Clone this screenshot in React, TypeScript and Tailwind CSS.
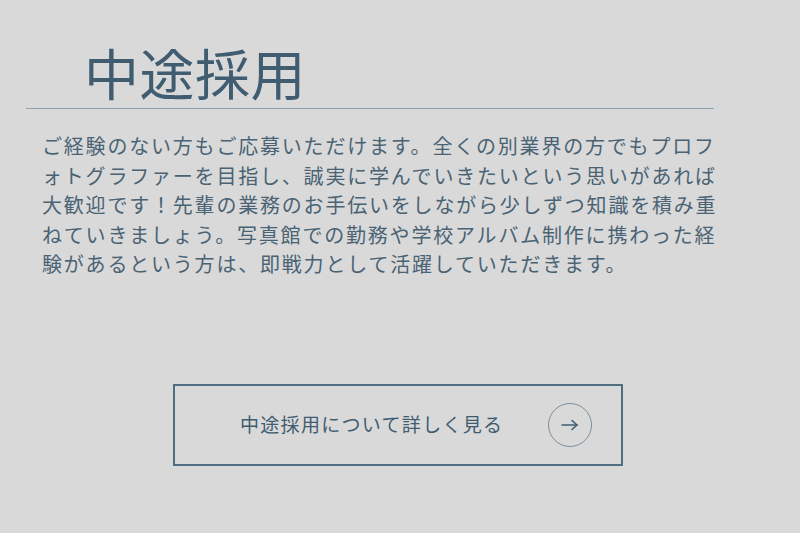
export default function App() {
  return (
    <div
      className="w-[800px] h-[533px] overflow-hidden bg-[#d9d9d9] text-[#3f5c70]"
      style={{ fontFamily: '"Noto Sans CJK JP", "Noto Sans", sans-serif' }}
    >
      <section className="pt-[37px]">
        <div className="ml-[26px] w-[688px] border-b border-[#8ea2b0] pl-[58px] pb-[2px]">
          <h1 className="text-[55px] leading-[69px] tracking-[0.5px] font-normal">中途採用</h1>
        </div>

        <p className="ml-[42px] w-[680px] mt-[22px] text-[20px] leading-[29.5px] tracking-[1.8px] text-[#4a6374]">
          ご経験のない方もご応募いただけます。全くの別業界の方でもプロフォトグラファーを目指し、誠実に学んでいきたいという思いがあれば大歓迎です！先輩の業務のお手伝いをしながら少しずつ知識を積み重ねていきましょう。写真館での勤務や学校アルバム制作に携わった経験があるという方は、即戦力として活躍していただきます。
        </p>

        <div className="mt-[105px] flex justify-start pl-[173px]">
          <a
            href="#"
            className="w-[450px] h-[82px] border-2 border-[#506d81] flex items-center justify-between pl-[65px] pr-[29px]"
          >
            <span className="text-[19px] tracking-[1.3px] text-[#3f5c70]">中途採用について詳しく見る</span>
            <span className="w-[44px] h-[44px] rounded-full border border-[#7b909e] flex items-center justify-center">
              <svg width="18" height="12" viewBox="0 0 18 12" fill="none" stroke="#3f5c70" strokeWidth="1.6" strokeLinecap="round" strokeLinejoin="round">
                <path d="M1 6h15" />
                <path d="M11 1.5L16 6l-5 4.5" />
              </svg>
            </span>
          </a>
        </div>
      </section>
    </div>
  );
}
